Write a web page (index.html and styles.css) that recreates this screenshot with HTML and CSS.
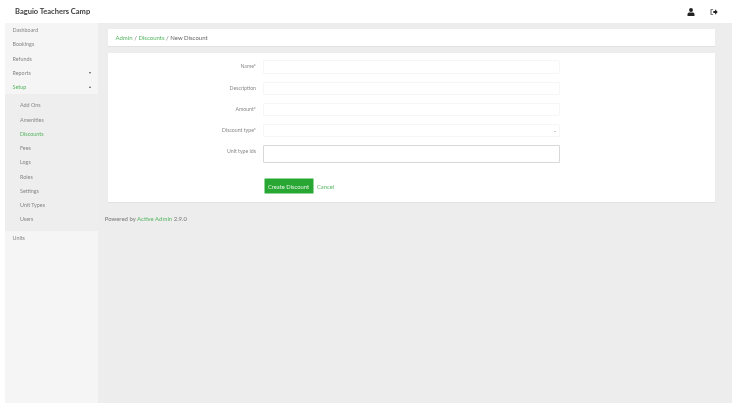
FILE: index.html
```html
<!DOCTYPE html>
<html lang="en">
<head>
<meta charset="utf-8">
<title>New Discount</title>
<link rel="stylesheet" href="styles.css">
</head>
<body>
<header class="topbar">
  <div class="brand">Baguio Teachers Camp</div>
  <div class="top-icons">
    <svg class="icon" viewBox="0 0 12 12" width="8" height="8"><circle cx="6" cy="3" r="2.9" fill="#222"/><path d="M0.8 12V9.4C0.8 7.6 2.2 6.6 3.8 6.6H8.2C9.8 6.6 11.2 7.6 11.2 9.4V12Z" fill="#222"/></svg>
    <svg class="icon" viewBox="0 0 12 12" width="8" height="8"><path d="M4.6 1.5H2.2C1.2 1.5.6 2.2.6 3.1V8.9C.6 9.8 1.2 10.5 2.2 10.5H4.6V9H2.4V3H4.6Z" fill="#777"/><path d="M5 4.4H7.6V2L11.6 6 7.6 10V7.6H5Z" fill="#222"/></svg>
  </div>
</header>
<div class="shell">
  <nav class="sidebar">
    <a class="nav-item">Dashboard</a>
    <a class="nav-item">Bookings</a>
    <a class="nav-item">Refunds</a>
    <a class="nav-item">Reports<span class="caret down"></span></a>
    <a class="nav-item active">Setup<span class="caret up"></span></a>
    <div class="submenu">
      <a class="sub-item">Add Ons</a>
      <a class="sub-item">Amenities</a>
      <a class="sub-item active">Discounts</a>
      <a class="sub-item">Fees</a>
      <a class="sub-item">Logs</a>
      <a class="sub-item">Roles</a>
      <a class="sub-item">Settings</a>
      <a class="sub-item">Unit Types</a>
      <a class="sub-item">Users</a>
    </div>
    <a class="nav-item">Units</a>
  </nav>
  <main class="content">
    <div class="card crumbs"><a>Admin</a> / <a>Discounts</a> / New Discount</div>
    <form class="card form">
      <div class="row r-name"><label>Name*</label><div class="input"></div></div>
      <div class="row r-desc"><label>Description</label><div class="input"></div></div>
      <div class="row r-amount"><label>Amount*</label><div class="input"></div></div>
      <div class="row r-type"><label>Discount type*</label><div class="input select"><span class="select-caret"></span></div></div>
      <div class="row r-units"><label>Unit type ids</label><div class="input multi"></div></div>
      <div class="actions"><button class="submit" type="button">Create Discount</button><a class="cancel">Cancel</a></div>
    </form>
    <footer class="footer">Powered by <a>Active Admin</a> 2.9.0</footer>
  </main>
</div>
</body>
</html>
```

FILE: styles.css
```css
* { box-sizing: border-box; }
html, body { margin: 0; }
html { background: #fff; overflow: hidden; height: 403px; }
body {
  font-family: Lato, "Open Sans", sans-serif;
  background: #fff;
  color: #777;
  display: flex;
  flex-direction: column;
  width: 736px;
  height: 407px;
  overflow: hidden;
  filter: blur(0.35px);
}
a { color: inherit; text-decoration: none; }
.topbar {
  height: 23px;
  flex: none;
  display: flex;
  align-items: center;
  justify-content: space-between;
  padding: 0 18.5px 0 15px;
}
.brand { font-size: 7.5px; font-weight: 700; color: #3d3d3d; }
.top-icons { display: flex; gap: 14.5px; align-items: center; }
.icon { display: block; }
.shell { flex: 1; display: flex; padding-left: 5px; min-height: 0; }
.sidebar {
  width: 93px;
  flex: none;
  background: #f5f5f5;
  font-size: 5.4px;
  color: #888;
}
.nav-item {
  display: flex;
  align-items: center;
  justify-content: space-between;
  height: 14.25px;
  padding: 0 7px 0 7.5px;
}
.nav-item.active, .sub-item.active { color: #55b560; }
.caret { width: 0; height: 0; border-left: 1.6px solid transparent; border-right: 1.6px solid transparent; }
.caret.down { border-top: 2px solid #555; }
.caret.up { border-bottom: 2px solid #555; }
.submenu { background: #eeeeee; padding: 4px 0 4.5px; }
.sub-item { display: flex; align-items: center; height: 14.25px; padding-left: 15px; }
.submenu + .nav-item { height: 14px; }
.content { flex: 1; min-width: 0; background: #ededed; padding: 6px 21px 0 10px; }
.card { background: #fff; border-radius: 1px; box-shadow: 0 1px 1px rgba(0,0,0,.05); }
.crumbs {
  height: 17px;
  display: flex;
  align-items: center;
  white-space: pre;
  padding-left: 7.5px;
  font-size: 6px;
  color: #666;
}
.crumbs a, .footer a { color: #55b560; }
.form { margin-top: 7px; height: 149px; padding-top: 7px; }
.row { display: flex; }
.row label {
  width: 122px;
  margin-left: 26px;
  margin-right: 7px;
  flex: none;
  text-align: right;
  font-size: 5.2px;
  color: #888;
  padding-top: 3.2px;
}
.input {
  width: 297px;
  height: 14px;
  background: #fff;
  border: 1px solid #f6f6f6;
  border-radius: 1px;
  position: relative;
}
.row + .row { margin-top: 7.5px; }
.r-desc .input, .r-amount .input, .r-type .input { height: 13.5px; }
.row.r-units { margin-top: 8.3px; }
.multi { height: 17.4px; border-color: #d8d8d8; }
.select-caret {
  position: absolute;
  right: 3px;
  top: 6px;
  width: 0; height: 0;
  border-left: 1.2px solid transparent;
  border-right: 1.2px solid transparent;
  border-top: 1.6px solid #999;
}
.actions { display: flex; align-items: center; margin-top: 15.3px; margin-left: 155.5px; }
.submit {
  width: 50px;
  height: 16.5px;
  padding: 0;
  border: 1px solid #8fd698;
  border-radius: 1.5px;
  background: #28a732;
  color: #e8f5e9;
  font: 5.8px Lato, sans-serif;
}
.cancel { margin-left: 3.5px; font-size: 5.8px; color: #55b560; }
.footer { margin-top: 13px; margin-left: -3.3px; font-size: 6px; color: #777; }
```
